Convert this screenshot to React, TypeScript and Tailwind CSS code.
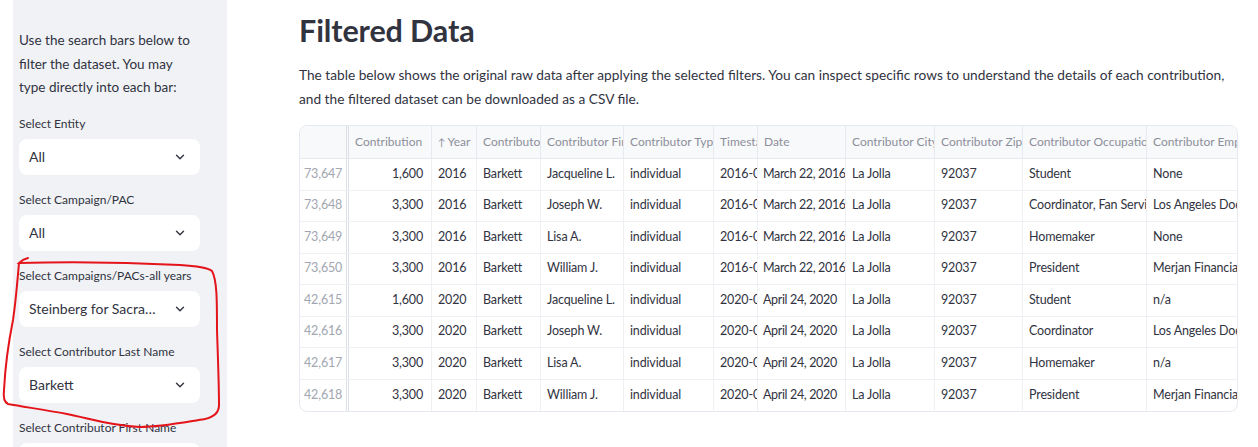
import { ChevronDown } from "lucide-react";

const filters = [
  { label: "Select Entity", value: "All" },
  { label: "Select Campaign/PAC", value: "All" },
  { label: "Select Campaigns/PACs-all years", value: "Steinberg for Sacramento Mayor 2016" },
  { label: "Select Contributor Last Name", value: "Barkett" },
  { label: "Select Contributor First Name", value: "Jacqueline L." },
];

const columns = [
  { name: "Contribution", w: "w-[83px]", right: true },
  { name: "↑ Year", w: "w-[45px]" },
  { name: "Contributor Last Name", w: "w-[64px]" },
  { name: "Contributor First Name", w: "w-[83px]" },
  { name: "Contributor Type", w: "w-[90px]" },
  { name: "Timestamp", w: "w-[44px]" },
  { name: "Date", w: "w-[88px]", tight: true },
  { name: "Contributor City", w: "w-[89px]" },
  { name: "Contributor Zip", w: "w-[88px]" },
  { name: "Contributor Occupation", w: "w-[124px]" },
  { name: "Contributor Employer", w: "w-[130px]" },
];

const first = ["Jacqueline L.", "Joseph W.", "Lisa A.", "William J."];
const amounts = ["1,600", "3,300", "3,300", "3,300"];
const occ2016 = ["Student", "Coordinator, Fan Services", "Homemaker", "President"];
const emp2016 = ["None", "Los Angeles Dodgers", "None", "Merjan Financial"];
const occ2020 = ["Student", "Coordinator", "Homemaker", "President"];
const emp2020 = ["n/a", "Los Angeles Dodgers", "n/a", "Merjan Financial"];

const rows = [
  ...first.map((f, i) => ({
    idx: `73,${647 + i}`,
    cells: [amounts[i], "2016", "Barkett", f, "individual", "2016-03-22 00:00:00", "March 22, 2016", "La Jolla", "92037", occ2016[i], emp2016[i]],
  })),
  ...first.map((f, i) => ({
    idx: `42,${615 + i}`,
    cells: [amounts[i], "2020", "Barkett", f, "individual", "2020-04-24 00:00:00", "April 24, 2020", "La Jolla", "92037", occ2020[i], emp2020[i]],
  })),
];

function Sidebar() {
  return (
    <aside className="w-[214px] shrink-0 bg-[#f0f2f6] px-[6px] pt-[29px] text-[#31333f]">
      <p className="w-[176px] text-[13.5px] leading-[23.5px]">
        Use the search bars below to filter the dataset. You may type directly into each bar:
      </p>
      <div className="mt-[14px] flex flex-col gap-[15px]">
        {filters.map((f) => (
          <div key={f.label}>
            <div className="h-[20px] text-[12px] leading-[20px] whitespace-nowrap">{f.label}</div>
            <div className="mt-[5px] h-[36px] w-[181px] rounded-lg bg-white flex items-center pl-[10px] pr-[13px]">
              <span className="flex-1 truncate text-[14px] pr-3">{f.value}</span>
              <ChevronDown size={14} strokeWidth={2.4} className="text-[#31333f]" />
            </div>
          </div>
        ))}
      </div>
    </aside>
  );
}

function DataTable() {
  return (
    <div className="mt-[14px] w-[939px] rounded-lg border border-[#e6e9ef] overflow-hidden text-[12.5px]">
      <div className="flex h-[33px] bg-[#f8f9fb] border-b border-[#e6e9ef] text-[#8c8f9a] text-[12px] whitespace-nowrap">
        <div className="w-[49px] shrink-0 border-r-[3px] border-double border-[#dcdfe5]" />
        {columns.map((c) => (
          <div key={c.name} className={`${c.w} shrink-0 overflow-hidden pl-[6px] flex items-center border-r border-[#e6e9ef]`}>
            {c.name === "↑ Year" ? (
              <span><span className="text-[10px] mr-[2px]">↑</span>Year</span>
            ) : (
              c.name
            )}
          </div>
        ))}
      </div>
      {rows.map((r) => (
        <div key={r.idx} className="flex h-[31.5px] border-b border-[#eef0f3] last:border-b-0 text-[#31333f] whitespace-nowrap tracking-[-0.15px]">
          <div className="w-[49px] shrink-0 border-r-[3px] border-double border-[#dcdfe5] flex items-center pl-[4px] text-[#a2a6b0] text-[12.5px]">
            {r.idx}
          </div>
          {r.cells.map((v, i) => (
            <div
              key={i}
              className={`${columns[i].w} shrink-0 overflow-hidden flex items-center border-r border-[#eef0f3] ${columns[i].right ? "justify-end pr-[8px]" : columns[i].tight ? "pl-[5px] tracking-[-0.35px]" : "pl-[6px]"}`}
            >
              {v}
            </div>
          ))}
        </div>
      ))}
    </div>
  );
}

export default function App() {
  return (
    <div className="relative h-[447px] w-[1258px] overflow-hidden bg-white flex font-['Lato',sans-serif]">
      <div className="w-[13px] shrink-0 bg-white" />
      <Sidebar />
      <main className="pl-[72px] pt-[12px] text-[#31333f]">
        <h1 className="text-[30.5px] leading-[36px] font-bold tracking-[-0.1px]">Filtered Data</h1>
        <p className="mt-[15px] text-[13.7px] leading-[24px] w-[930px]">
          The table below shows the original raw data after applying the selected filters. You can inspect specific rows to understand the details of each contribution, and the filtered dataset can be downloaded as a CSV file.
        </p>
        <DataTable />
      </main>
      <svg className="absolute left-0 top-0 pointer-events-none" width="240" height="447" viewBox="0 0 240 447">
        <path
          d="M28 258 C24 259 21 261 19 263 C60 262 120 262 180 265 C198 266 208 268 212 271 C217 280 217 300 217 330 C218 360 219 385 219 405 C219 412 214 417 205 419 C180 423 160 427 140 427 C110 426 88 418 67 414 C45 410 25 407 8 404 C4 402 3 398 4 390 C5 370 8 345 13 320 C16 300 17 285 19 263"
          fill="none"
          stroke="#e4141b"
          strokeWidth="2"
          strokeLinecap="round"
        />
      </svg>
    </div>
  );
}
